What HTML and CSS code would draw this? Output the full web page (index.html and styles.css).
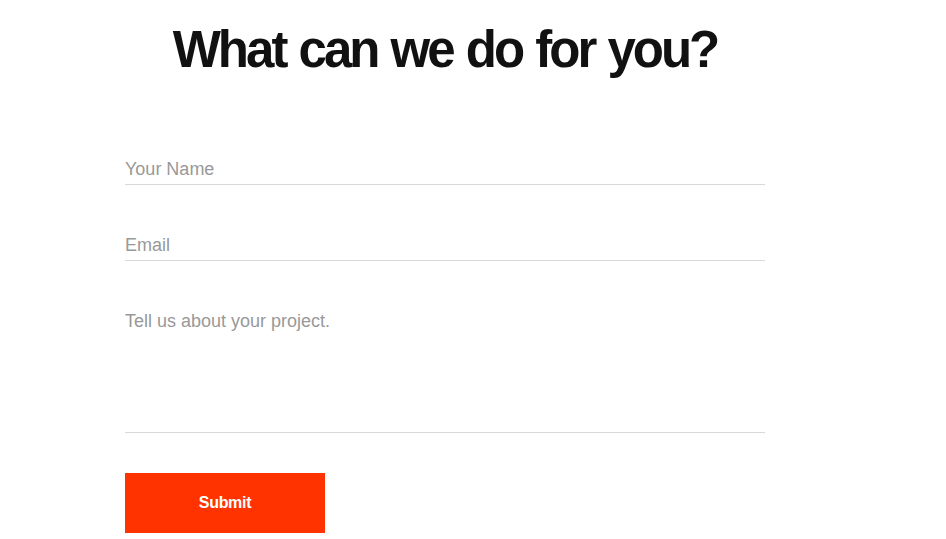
FILE: index.html
```html
<!DOCTYPE html>
<html lang="en">
<head>
<meta charset="utf-8">
<title>Contact</title>
<link rel="stylesheet" href="styles.css">
</head>
<body>
<main class="page">
  <h1 class="title">What can we do for you?</h1>
  <form class="form">
    <input class="field" type="text" placeholder="Your Name">
    <input class="field" type="email" placeholder="Email">
    <textarea class="field area" placeholder="Tell us about your project."></textarea>
    <button class="submit" type="button">Submit</button>
  </form>
</main>
</body>
</html>
```

FILE: styles.css
```css
* { box-sizing: border-box; }
html, body { margin: 0; padding: 0; background: #fff; }
body { font-family: "Liberation Sans", Arial, sans-serif; }
.page { width: 946px; padding: 20px 0 0 125px; }
.title {
  margin: 0;
  width: 640px;
  text-align: center;
  font-size: 51px;
  line-height: 60px;
  font-weight: 700;
  letter-spacing: -3px;
  word-spacing: 2px;
  color: #111;
}
.form {
  width: 640px;
  display: flex;
  flex-direction: column;
  align-items: flex-start;
  padding-top: 74px;
}
.field {
  width: 100%;
  border: 0;
  border-bottom: 1px solid #d8d8d8;
  padding: 3px 0 2px 0;
  margin: 0 0 45px 0;
  font-family: "Liberation Sans", Arial, sans-serif;
  font-size: 18px;
  line-height: 25px;
  color: #333;
  background: transparent;
  outline: none;
}
.field::placeholder { color: #999; opacity: 1; }
.area { height: 127px; resize: none; margin-bottom: 40px; display: block; }
.submit {
  width: 200px;
  height: 60px;
  border: 0;
  background: #ff3300;
  color: #fff;
  font-family: "Liberation Sans", Arial, sans-serif;
  font-weight: 700;
  font-size: 16px;
  letter-spacing: -0.3px;
  cursor: pointer;
}
```
